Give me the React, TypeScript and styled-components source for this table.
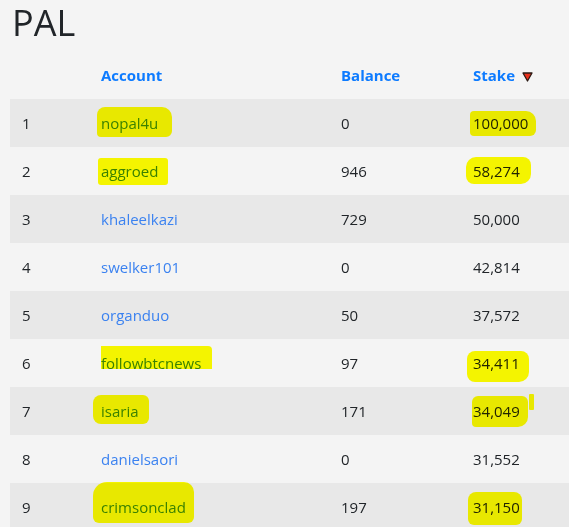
import React from "react";
import styled, { createGlobalStyle } from "styled-components";

const Global = createGlobalStyle`
  html, body { margin: 0; padding: 0; background: #f4f4f4; overflow: hidden; }
  body { font-family: "Open Sans", "Noto Sans", sans-serif; color: #212529; }
`;

const Page = styled.div`
  padding: 0 0 0 10px;
`;

const Title = styled.h1`
  margin: 0 0 5px 2px;
  font-size: 36px;
  line-height: 46px;
  font-weight: 500;
  color: #212529;
`;

const Table = styled.table`
  width: 559px;
  table-layout: fixed;
  border-collapse: collapse;
  font-size: 15px;
`;

const Th = styled.th<{ $w: number }>`
  box-sizing: border-box;
  width: ${(p) => p.$w}px;
  text-align: left;
  padding: 12px;
  line-height: 24px;
  font-weight: 700;
  color: #0d7bff;
  white-space: nowrap;
`;

const Row = styled.tr<{ $odd: boolean }>`
  background: ${(p) => (p.$odd ? "#e8e8e8" : "#f4f4f4")};
`;

const Td = styled.td`
  padding: 12px;
  line-height: 24px;
  white-space: nowrap;
`;

const AccountLink = styled.a`
  color: #3b82f0;
  text-decoration: none;
`;

const Mark = styled.span<{ $t: number; $r: number; $b: number; $l: number; $radius: string }>`
  position: relative;
  display: inline-block;
  &::after {
    content: "";
    position: absolute;
    top: ${(p) => p.$t}px;
    right: ${(p) => p.$r}px;
    bottom: ${(p) => p.$b}px;
    left: ${(p) => p.$l}px;
    background: #ffff00;
    border-radius: ${(p) => p.$radius};
    mix-blend-mode: multiply;
    pointer-events: none;
  }
`;

const Stroke = styled.span`
  position: absolute;
  left: calc(100% + 9px);
  top: -5px;
  width: 5px;
  height: 16px;
  background: #ffff00;
  mix-blend-mode: multiply;
  border-radius: 1px;
`;

const SortIcon = styled.svg`
  width: 11px;
  height: 10px;
  margin-left: 7px;
  vertical-align: -1px;
`;

type Hl = [number, number, number, number, string];

interface Entry {
  n: number;
  acct: string;
  bal: string;
  stake: string;
  ha?: Hl;
  hs?: Hl;
  stray?: boolean;
}

const rows: Entry[] = [
  { n: 1, acct: "nopal4u", bal: "0", stake: "100,000", ha: [-4, -14, -2, -4, "8px 10px 6px 4px"], hs: [0, -8, -1, -3, "4px 10px 6px 4px"] },
  { n: 2, acct: "aggroed", bal: "946", stake: "58,274", ha: [-1, -10, -2, -3, "3px"], hs: [-2, -11, -1, -7, "10px 8px 10px 8px"] },
  { n: 3, acct: "khaleelkazi", bal: "729", stake: "50,000" },
  { n: 4, acct: "swelker101", bal: "0", stake: "42,814" },
  { n: 5, acct: "organduo", bal: "50", stake: "37,572" },
  { n: 6, acct: "followbtcnews", bal: "97", stake: "34,411", ha: [-5, -11, 6, 0, "0 4px 0 0"], hs: [0, -9, -7, -6, "8px 8px 10px 8px"] },
  { n: 7, acct: "isaria", bal: "171", stake: "34,049", ha: [-4, -10, -1, -8, "8px 6px 6px 8px"], hs: [-3, -8, -4, -1, "6px 6px 10px 4px"], stray: true },
  { n: 8, acct: "danielsaori", bal: "0", stake: "31,552" },
  { n: 9, acct: "crimsonclad", bal: "197", stake: "31,150", ha: [-13, -8, -4, -8, "14px 10px 6px 6px"], hs: [-3, -2, -6, -5, "8px 8px 6px 6px"] },
];

function wrap(text: React.ReactNode, h?: Hl, extra?: React.ReactNode) {
  if (!h) return text;
  return (
    <Mark $t={h[0]} $r={h[1]} $b={h[2]} $l={h[3]} $radius={h[4]}>
      {text}
      {extra}
    </Mark>
  );
}

export default function App() {
  return (
    <>
      <Global />
      <Page>
        <Title>PAL</Title>
        <Table>
          <thead>
            <tr>
              <Th $w={79}></Th>
              <Th $w={240}>Account</Th>
              <Th $w={132}>Balance</Th>
              <Th $w={108}>
                Stake
                <SortIcon viewBox="0 0 11 10">
                  <path d="M1 1 L10 1 L5.5 9 Z" fill="#e8301c" stroke="#2a1a14" strokeWidth="1.3" strokeLinejoin="round" />
                </SortIcon>
              </Th>
            </tr>
          </thead>
          <tbody>
            {rows.map((r) => (
              <Row key={r.n} $odd={r.n % 2 === 1}>
                <Td>{r.n}</Td>
                <Td>{wrap(<AccountLink href="#">{r.acct}</AccountLink>, r.ha)}</Td>
                <Td>{r.bal}</Td>
                <Td>{wrap(r.stake, r.hs, r.stray ? <Stroke /> : null)}</Td>
              </Row>
            ))}
          </tbody>
        </Table>
      </Page>
    </>
  );
}
